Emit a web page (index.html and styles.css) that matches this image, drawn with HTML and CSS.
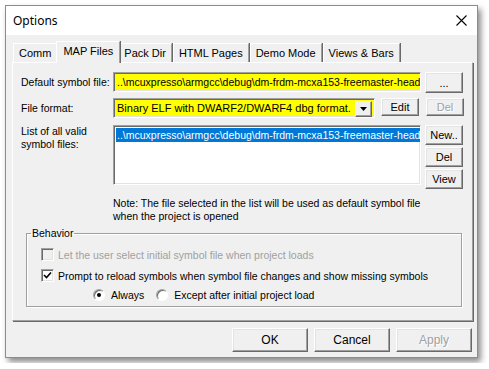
FILE: index.html
```html
<!DOCTYPE html>
<html lang="en">
<head>
  <meta charset="UTF-8" />
  <title>Options</title>
  <link rel="stylesheet" href="styles.css">
</head>
<body>
<div class="window">
  <div class="titlebar">
    <span class="title">Options</span>
    <svg class="close" width="11" height="11" viewBox="0 0 11 11">
      <path d="M0.5 0.5 L10.5 10.5 M10.5 0.5 L0.5 10.5" stroke="#000" stroke-width="1.1" fill="none"/>
    </svg>
  </div>

  <div class="client">
    <div class="tabs">
      <div class="tab">Comm</div>
      <div class="tab active">MAP Files</div>
      <div class="tab">Pack Dir</div>
      <div class="tab">HTML Pages</div>
      <div class="tab">Demo Mode</div>
      <div class="tab">Views &amp; Bars</div>
    </div>

    <div class="panel">
      <div class="row row-default">
        <label class="lbl">Default symbol file:</label>
        <div class="field yellow wide">..\mcuxpresso\armgcc\debug\dm-frdm-mcxa153-freemaster-head</div>
        <button class="btn">...</button>
      </div>

      <div class="row row-format">
        <label class="lbl">File format:</label>
        <div class="field yellow combo">
          <span class="combo-text">Binary ELF with DWARF2/DWARF4 dbg format.</span>
          <span class="drop"><svg width="7" height="4" viewBox="0 0 7 4"><path d="M0 0 H7 L3.5 4 Z" fill="#000"/></svg></span>
        </div>
        <button class="btn edit">Edit</button>
        <button class="btn disabled">Del</button>
      </div>

      <div class="row row-list">
        <label class="lbl">List of all valid<br>symbol files:</label>
        <div class="field listbox">
          <div class="list-item selected">..\mcuxpresso\armgcc\debug\dm-frdm-mcxa153-freemaster-head</div>
        </div>
        <div class="side-buttons">
          <button class="btn">New..</button>
          <button class="btn">Del</button>
          <button class="btn">View</button>
        </div>
      </div>

      <p class="note">Note: The file selected in the list will be used as default symbol file<br>when the project is opened</p>

      <fieldset class="group">
        <legend>Behavior</legend>
        <div class="check disabled"><span class="box"></span>Let the user select initial symbol file when project loads</div>
        <div class="check"><span class="box checked"><svg width="9" height="9" viewBox="0 0 9 9"><path d="M1 4 L3.5 6.5 L8 1.5" stroke="#000" stroke-width="1.6" fill="none"/></svg></span>Prompt to reload symbols when symbol file changes and show missing symbols</div>
        <div class="radios">
          <span class="radio"><span class="dot on"></span>Always</span>
          <span class="radio"><span class="dot"></span>Except after initial project load</span>
        </div>
      </fieldset>
    </div>

    <div class="footer">
      <button class="btn big">OK</button>
      <button class="btn big">Cancel</button>
      <button class="btn big disabled">Apply</button>
    </div>
  </div>
</div>
</body>
</html>
```

FILE: styles.css
```css
body {
  margin: 0;
  padding: 5px;
  background: #fff;
  font-family: "Liberation Sans", Arial, sans-serif;
  font-size: 10.5px;
  color: #000;
}

.window {
  width: 471px;
  height: 351px;
  border: 1px solid #8c8c8c;
  background: #f0f0f0;
  box-shadow: 3px 4px 6px rgba(0, 0, 0, 0.45);
}

.titlebar {
  height: 29px;
  background: #fff;
  display: flex;
  align-items: center;
  justify-content: space-between;
  padding: 0 10px 0 7px;
}

.title {
  font-family: "Noto Sans", sans-serif;
  font-size: 12px;
  margin-top: -1px;
}

.client {
  padding: 6px 5px 0 6px;
}

/* tabs */
.tabs {
  display: flex;
  align-items: flex-end;
  height: 21px;
  padding-left: 1px;
  position: relative;
  z-index: 1;
}

.tab {
  height: 18px;
  line-height: 18px;
  padding: 0 5px;
  border: 1px solid #fff;
  border-right-color: #a0a0a0;
  border-bottom: none;
  box-shadow: 1px 0 0 #696969;
  margin-right: 1px;
  background: #f0f0f0;
  font-size: 11px;
}

.tab.active {
  height: 21px;
  line-height: 19px;
  margin: 0 0 -1px -2px;
  padding: 0 6px;
  position: relative;
  z-index: 2;
}

.tab.active + .tab {
  margin-left: -2px;
}

.panel {
  box-sizing: border-box;
  height: 259px;
  width: 461px;
  border: 1px solid #fff;
  border-right-color: #a0a0a0;
  border-bottom-color: #a0a0a0;
  box-shadow: 1px 1px 0 #696969;
  padding: 9px 0 0 8px;
}

/* form rows */
.row {
  display: flex;
  align-items: flex-start;
}

.lbl {
  width: 92px;
  flex: none;
  line-height: 13px;
  white-space: nowrap;
}

.row-default .lbl,
.row-format .lbl {
  padding-top: 4px;
}

.row-format {
  margin-top: 5px;
}

.row-list {
  margin-top: 7px;
}

.field {
  box-sizing: border-box;
  height: 20px;
  border: 1px solid #a0a0a0;
  border-right-color: #fff;
  border-bottom-color: #fff;
  box-shadow: inset 1px 1px 0 #696969, inset -1px -1px 0 #e3e3e3;
  white-space: nowrap;
  overflow: hidden;
  padding: 3px 0 0 3px;
}

.yellow {
  background: #ffff00;
}

.wide {
  width: 308px;
  margin-right: 4px;
}

.combo {
  width: 262px;
  display: flex;
  padding: 2px 2px 2px 3px;
  margin-right: 6px;
}

.combo-text {
  flex: 1;
  padding-top: 1px;
  font-size: 11px;
}

.drop {
  width: 17px;
  flex: none;
  display: flex;
  align-items: center;
  justify-content: center;
  background: #f0f0f0;
  border: 1px solid #fff;
  border-right-color: #696969;
  border-bottom-color: #696969;
  box-shadow: inset -1px -1px 0 #a0a0a0;
  box-sizing: border-box;
  height: 16px;
}

.listbox {
  width: 308px;
  height: 60px;
  background: #fff;
  padding: 2px 0 0 2px;
  margin-right: 4px;
}

.list-item {
  height: 14px;
  line-height: 14px;
  padding-left: 1px;
  width: 304px;
  overflow: hidden;
}

.list-item.selected {
  background: #0078d7;
  color: #fff;
}

/* buttons */
.btn {
  box-sizing: border-box;
  width: 38px;
  height: 21px;
  padding: 0;
  font: inherit;
  font-size: 11px;
  color: #000;
  background: #f0f0f0;
  border: 1px solid #fff;
  border-right-color: #696969;
  border-bottom-color: #696969;
  box-shadow: inset -1px -1px 0 #a0a0a0, inset 1px 1px 0 #e3e3e3;
}

.btn.edit {
  margin-right: 7px;
  height: 18px;
}

.row-format .btn.disabled {
  height: 18px;
}

.btn.disabled {
  color: #a0a0a0;
  text-shadow: 1px 1px 0 #fff;
}

.side-buttons {
  display: flex;
  flex-direction: column;
  gap: 2px;
}

.side-buttons .btn {
  height: 20px;
}

.note {
  margin: 8px 0 0 92px;
  line-height: 13px;
}

/* group box */
.group {
  margin: 4px 0 0 5px;
  width: 436px;
  height: 80px;
  box-sizing: border-box;
  border: 1px solid #a0a0a0;
  box-shadow: inset 1px 1px 0 #fff, 1px 1px 0 #fff;
  padding: 6px 0 0 14px;
}

.group legend {
  padding: 0 1px;
  margin-left: -10px;
}

.check {
  display: flex;
  align-items: center;
  height: 13px;
  margin-top: 3px;
}

.check + .check {
  margin-top: 8px;
}

.check.disabled {
  color: #a0a0a0;
}

.box {
  box-sizing: border-box;
  width: 13px;
  height: 13px;
  margin-right: 4px;
  background: #fff;
  border: 1px solid #a0a0a0;
  border-right-color: #fff;
  border-bottom-color: #fff;
  box-shadow: inset 1px 1px 0 #696969, inset -1px -1px 0 #e3e3e3;
  display: flex;
  align-items: center;
  justify-content: center;
}

.check.disabled .box {
  background: #f0f0f0;
}

.radios {
  display: flex;
  margin: 7px 0 0 52px;
}

.radio {
  display: flex;
  align-items: center;
  margin-right: 12px;
}

.dot {
  box-sizing: border-box;
  width: 12px;
  height: 12px;
  border-radius: 50%;
  background: #fff;
  border: 1px solid #a0a0a0;
  border-right-color: #fff;
  border-bottom-color: #fff;
  box-shadow: inset 1px 1px 0 #696969;
  margin-right: 6px;
  position: relative;
}

.dot.on::after {
  content: "";
  position: absolute;
  left: 3px;
  top: 3px;
  width: 4px;
  height: 4px;
  border-radius: 50%;
  background: #000;
}

/* bottom buttons */
.footer {
  display: flex;
  justify-content: flex-end;
  gap: 6px;
  margin-top: 7px;
}

.btn.big {
  width: 76px;
  height: 24px;
  font-size: 12px;
}
```
